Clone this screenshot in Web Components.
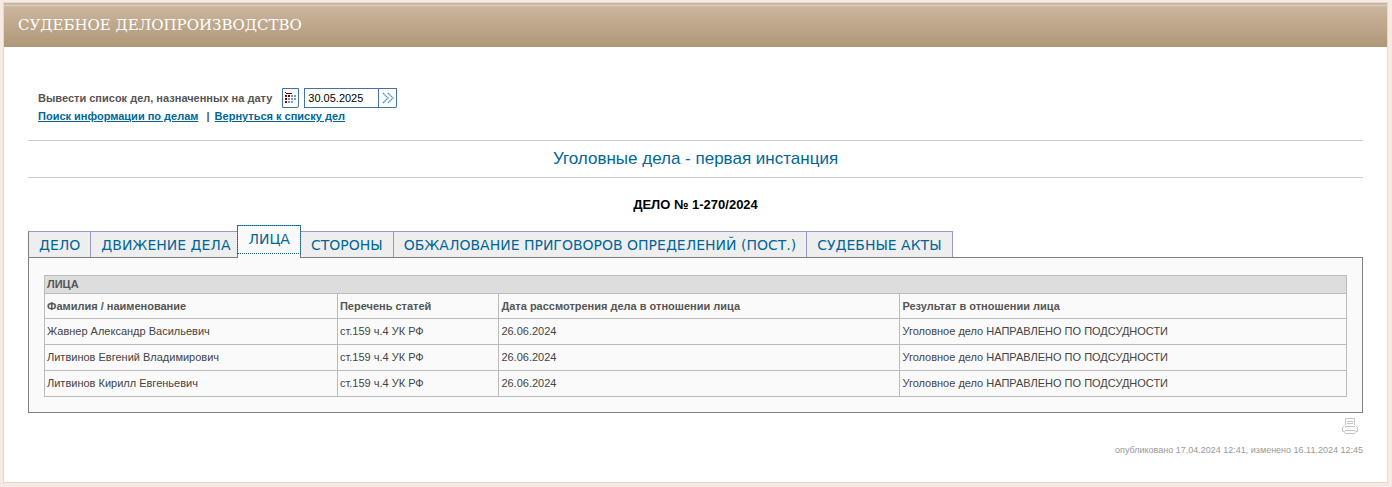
<!DOCTYPE html>
<html lang="ru">
<head>
<meta charset="utf-8">
<title>Судебное делопроизводство</title>
<style>
body { margin: 0; padding: 2px 4px 4px 3px; background: #f5ebe2; font: 11px/18px "Liberation Sans", Arial, sans-serif; color: #444; }
</style>
</head>
<body>
<court-page>
  <span slot="title">СУДЕБНОЕ ДЕЛОПРОИЗВОДСТВО</span>
  <date-search date="30.05.2025"></date-search>
  <section-title>Уголовные дела - первая инстанция</section-title>
  <case-number>ДЕЛО № 1-270/2024</case-number>
  <tab-strip>
    <case-tab>ДЕЛО</case-tab>
    <case-tab>ДВИЖЕНИЕ ДЕЛА</case-tab>
    <case-tab active>ЛИЦА</case-tab>
    <case-tab>СТОРОНЫ</case-tab>
    <case-tab>ОБЖАЛОВАНИЕ ПРИГОВОРОВ ОПРЕДЕЛЕНИЙ (ПОСТ.)</case-tab>
    <case-tab>СУДЕБНЫЕ АКТЫ</case-tab>
    <persons-table slot="panel"></persons-table>
  </tab-strip>
  <page-info>опубликовано 17.04.2024 12:41, изменено 16.11.2024 12:45</page-info>
</court-page>
<script>
const define = (name, html, setup) => {
  const template = document.createElement('template');
  template.innerHTML = html;
  customElements.define(name, class extends HTMLElement {
    constructor() {
      super();
      this.attachShadow({ mode: 'open' }).append(template.content.cloneNode(true));
    }
    connectedCallback() { if (setup) setup(this, this.shadowRoot); }
  });
};

define('court-page', `
<style>
:host { display: block; background: #fff; border: 1px solid #e4d9cf; }
header { box-sizing: border-box; height: 44px; padding: 0 14px; display: flex; align-items: center;
  background: linear-gradient(#c6b5a0 0 1px, #c9b8a5 1px 2px, #dccfc0 2px 3px, #cbb9a4 3px, #cab49c 5px, #af9778); }
h1 { margin: 0; font: 15px/20px "DejaVu Serif", Georgia, serif; color: #fff; }
main { padding: 41px 24px 24px; }
</style>
<header><h1><slot name="title"></slot></h1></header>
<main><slot></slot></main>`);

define('date-search', `
<style>
:host { display: block; padding: 0 10px; font-weight: bold; color: #555; }
form { display: flex; align-items: center; height: 20px; }
label { margin-right: 10px; }
button { box-sizing: border-box; height: 20px; padding: 0; border: 1px solid #4472a3; background: #fff; display: flex; align-items: center; justify-content: center; }
.calendar { width: 17px; margin-right: 5px; border-radius: 0 0 2px 0; }
.go { width: 18px; border-left: 0; border-radius: 0 0 2px 0; }
input { box-sizing: border-box; width: 75px; height: 20px; margin: 0; padding: 0 3px; border: 1px solid #4472a3; border-radius: 0; font: 11px "Liberation Sans", Arial, sans-serif; color: #000; background: #fff; }
nav { display: flex; gap: 5px; line-height: 16px; }
a { color: #069; }
svg { display: block; flex: none; }
</style>
<form>
  <label for="date">Вывести список дел, назначенных на дату</label>
  <button class="calendar" type="button" aria-label="Календарь">
    <svg width="13" height="12" viewBox="0 0 13 12" shape-rendering="crispEdges">
      <path fill="#800000" d="M1 0h1v1h-1zM2 1h6v1h-6zM1 3h2v2h-2zM1 6h2v2h-2zM1 9h2v2h-2zM4 3h2v2h-2z"/>
      <path fill="#6e9ac0" d="M7 3h2v2h-2zM10 3h2v2h-2zM4 6h2v2h-2zM7 6h2v2h-2zM10 6h2v2h-2zM4 9h2v2h-2zM7 9h2v2h-2z"/>
    </svg>
  </button>
  <input id="date" type="text">
  <button class="go" type="button" aria-label="Показать">
    <svg width="12" height="12" viewBox="0 0 12 12" fill="none" stroke="#5d95c4" stroke-width="1.6" stroke-dasharray="1.5 .6">
      <path d="M1 1l5 5-5 5M6 1l5 5-5 5"/>
    </svg>
  </button>
</form>
<nav><a href="#search">Поиск информации по делам</a><span>&nbsp;|</span><a href="#list">Вернуться к списку дел</a></nav>`,
(el, root) => { root.querySelector('input').value = el.getAttribute('date'); });

define('section-title', `
<style>
:host { display: block; margin-top: 16px; border: solid #ccc; border-width: 1px 0; }
h2 { margin: 0; text-align: center; font-weight: normal; font-size: 17px; line-height: 36px; color: #069; }
</style>
<h2><slot></slot></h2>`);

define('case-number', `
<style>
:host { display: block; margin: 17px 0 10px; }
h3 { margin: 0; text-align: center; font-weight: bold; font-size: 13px; line-height: 20px; color: #000; }
</style>
<h3><slot></slot></h3>`);

define('tab-strip', `
<style>
:host { display: block; }
.tabs { display: flex; align-items: flex-end; padding-right: 1px; }
.panel { border: 1px solid #808080; background: #fafafa; padding: 17px 15px 15px; }
</style>
<div class="tabs" role="tablist"><slot></slot></div>
<div class="panel" role="tabpanel"><slot name="panel"></slot></div>`);

define('case-tab', `
<style>
:host { display: block; border: solid #99c; border-width: 1px 0 0 1px; background: #eee; }
:host(:first-child) { border-left-color: #808080; }
:host(:nth-last-child(2)) { border-right-width: 1px; }
:host([active]) { position: relative; background: #fafafa; border-color: #778; border-right-width: 1px; margin: 0 -1px -1px -3px; padding-bottom: 4px; }
button { display: block; margin: 0; padding: 0 10px; border: 0; background: none; font: 14px/25px "DejaVu Sans", Verdana, sans-serif; color: #069; white-space: nowrap; }
button span { position: relative; top: 1px; }
:host([active]) button { line-height: 27px; outline: 1px dotted #069; margin-bottom: 1px; }
:host([active]) span { top: 0; }
</style>
<button type="button" role="tab"><span><slot></slot></span></button>`,
(el, root) => { root.querySelector('button').setAttribute('aria-selected', el.hasAttribute('active')); });

define('persons-table', `
<style>
:host { display: block; }
table { width: 100%; table-layout: fixed; border-collapse: collapse; line-height: 13px; }
th, td { height: 25px; padding: 0 2px; border: 1px solid #bbb; text-align: left; vertical-align: middle; }
th { color: #555; }
thead tr:first-child th { height: 17px; background: #ddd; }
thead tr:nth-child(2) th { height: 24px; }
</style>
<table>
  <colgroup><col style="width:22.5%"><col style="width:12.4%"><col style="width:30.8%"><col></colgroup>
  <thead>
    <tr><th colspan="4">ЛИЦА</th></tr>
    <tr><th>Фамилия / наименование</th><th>Перечень статей</th><th>Дата рассмотрения дела в отношении лица</th><th>Результат в отношении лица</th></tr>
  </thead>
  <tbody>
    <tr><td>Жавнер Александр Васильевич</td><td>ст.159 ч.4 УК РФ</td><td>26.06.2024</td><td>Уголовное дело НАПРАВЛЕНО ПО ПОДСУДНОСТИ</td></tr>
    <tr><td>Литвинов Евгений Владимирович</td><td>ст.159 ч.4 УК РФ</td><td>26.06.2024</td><td>Уголовное дело НАПРАВЛЕНО ПО ПОДСУДНОСТИ</td></tr>
    <tr><td>Литвинов Кирилл Евгеньевич</td><td>ст.159 ч.4 УК РФ</td><td>26.06.2024</td><td>Уголовное дело НАПРАВЛЕНО ПО ПОДСУДНОСТИ</td></tr>
  </tbody>
</table>`);

define('page-info', `
<style>
:host { display: flex; flex-direction: column; align-items: flex-end; gap: 8px; padding-top: 5px; font-size: 9px; line-height: 16px; color: #999; }
a { display: block; margin-right: 5px; }
svg { display: block; }
</style>
<a href="#print" aria-label="Печать">
  <svg width="16" height="16" viewBox="0 0 16 16" fill="none" stroke="#c4c4c4">
    <path d="M3.5 7V.5h9V7M5 3.5h6M5 5.5h6M3 8.5h10M2.5 7.5l-2 2v4h2v1l1 1h9l1-1v-1h2v-4l-2-2M3 12.5h10"/>
  </svg>
</a>
<div><slot></slot></div>`);
</script>
</body>
</html>
